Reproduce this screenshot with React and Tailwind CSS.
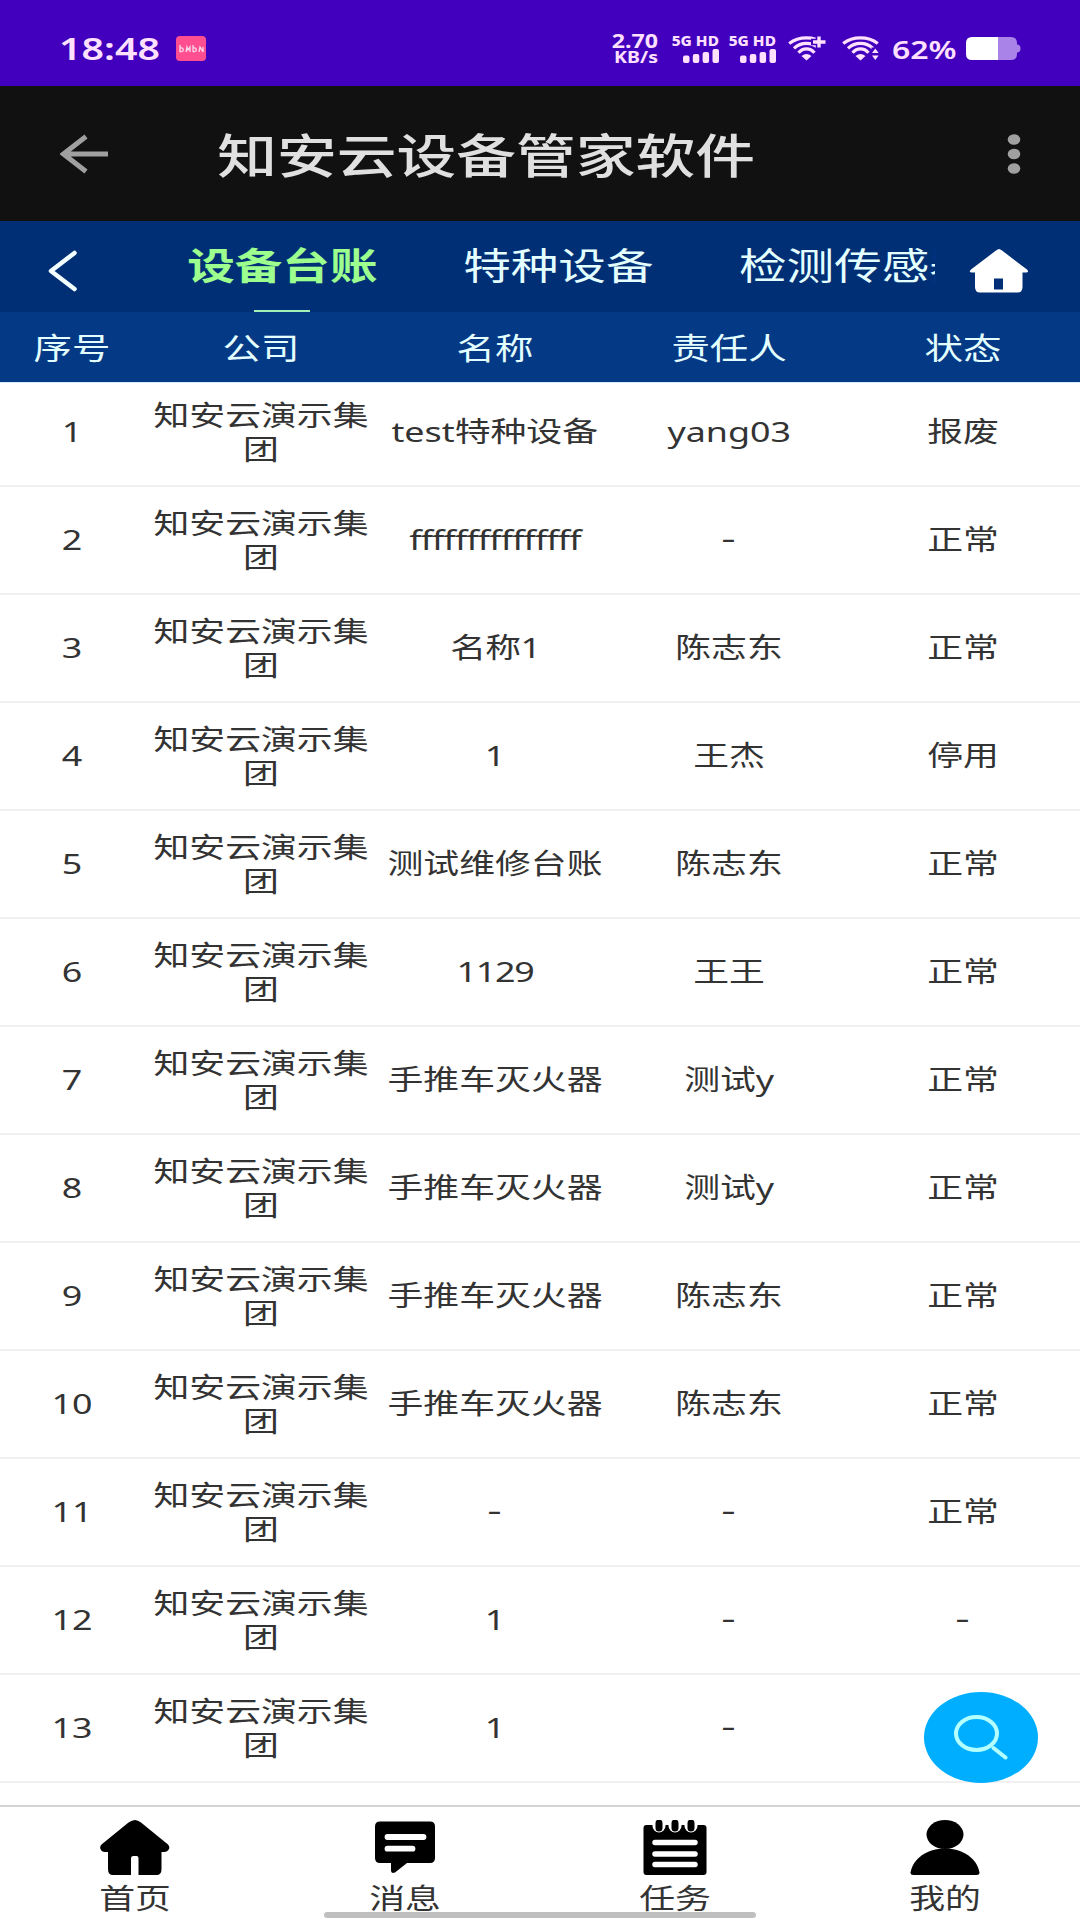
import clsx from "clsx";

const company = "知安云演示集团";

const rows = [
  { name: "test特种设备", owner: "yang03", status: "报废" },
  { name: "fffffffffffffff", owner: "-", status: "正常", tight: "tracking-[-0.7px]" },
  { name: "名称1", owner: "陈志东", status: "正常", tight: "tracking-[-0.5px]" },
  { name: "1", owner: "王杰", status: "停用" },
  { name: "测试维修台账", owner: "陈志东", status: "正常" },
  { name: "1129", owner: "王王", status: "正常", tight: "tracking-[-1px]" },
  { name: "手推车灭火器", owner: "测试y", status: "正常" },
  { name: "手推车灭火器", owner: "测试y", status: "正常" },
  { name: "手推车灭火器", owner: "陈志东", status: "正常" },
  { name: "手推车灭火器", owner: "陈志东", status: "正常" },
  { name: "-", owner: "-", status: "正常" },
  { name: "1", owner: "-", status: "-" },
  { name: "1", owner: "-", status: "" },
];

const columns = ["序号", "公司", "名称", "责任人", "状态"];

const tabs = [
  { label: "设备台账", width: "w-[276px]", active: true },
  { label: "特种设备", width: "w-[276px]" },
  { label: "检测传感器", width: "w-[324px]" },
];

// The whole UI uses wide letterforms
const Wide = ({ className, children }) => (
  <span className={clsx("inline-block scale-x-[1.28] whitespace-nowrap", className)}>
    {children}
  </span>
);

const Signal = () => (
  <div className="flex flex-col items-end w-[48px]">
    <span className="text-[14px] leading-[14px] font-extrabold origin-right scale-x-[1.1] -mt-[1px] whitespace-nowrap">
      5G HD
    </span>
    <svg width="36" height="14" viewBox="0 0 36 14" className="mt-[1px]" fill="currentColor">
      <rect x="0" y="6.5" width="6.5" height="7.5" rx="2" />
      <rect x="9.8" y="5" width="6.5" height="9" rx="2" />
      <rect x="19.6" y="3" width="6.5" height="11" rx="2" />
      <rect x="29.5" y="0" width="6.5" height="14" rx="2" />
    </svg>
  </div>
);

const Wifi = ({ children }) => (
  <svg width="38" height="25" viewBox="0 0 38 25" fill="none" stroke="currentColor" strokeWidth="3.2">
    <path d="M1.200 7.500C11 0 26 0 35.800 7.500" />
    <path d="M6 12.300C13 5.700 24 5.700 31 12.300" />
    <path d="M10.500 16.800C15 11.600 22 11.600 26.500 16.800" />
    <path d="M13.500 20Q18.500 16 23.500 20L18.500 24.500Z" fill="currentColor" stroke="none" />
    {children}
  </svg>
);

const StatusBar = () => (
  <div className="flex items-center h-[86px] bg-[#4200be] text-[#ffe0ff] pt-[11px] pl-[59px] pr-[59px]">
    <span className="text-[31px] font-semibold leading-none origin-left scale-x-[1.27] w-[117px]">18:48</span>
    <svg width="30" height="25" viewBox="0 0 30 25">
      <rect width="30" height="25" rx="4" fill="#ff4f90" />
      <path
        d="M4 9v7M4 12q4-1 3 3l-3 1M10 16l1-5 1 3 2-3v5M17 9v7M17 12q4-1 3 3l-3 1M23 16l1-5 3 5M27 11v5"
        fill="none"
        stroke="#ffd9ec"
        strokeWidth="1.3"
      />
    </svg>
    <div className="flex items-center ml-auto">
      <div className="flex flex-col items-end w-[46px] mr-[13px] font-bold">
        <span className="text-[19px] leading-[16px] origin-right scale-x-[1.22]">2.70</span>
        <span className="text-[16px] leading-[16px] origin-right scale-x-[1.22]">KB/s</span>
      </div>
      <Signal />
      <div className="w-[9px]" />
      <Signal />
      <div className="w-[12px]" />
      <Wifi>
        <path d="M31 -1v16M23 6h15" stroke="#4200be" strokeWidth="6.500" />
        <path d="M31 0.500v11M25 6h12.500" strokeWidth="3.400" />
      </Wifi>
      <div className="w-[16px]" />
      <Wifi>
        <path d="M33.500 11.500v14" stroke="#4200be" strokeWidth="8" />
        <path d="M30 17l3.300-4.500 3.300 4.500zM30 19.500h6.600l-3.300 4.500z" fill="currentColor" stroke="none" />
      </Wifi>
      <div className="flex justify-center w-[64px] ml-[12px] mr-[10px] pt-[2px]">
        <Wide className="text-[25px] font-semibold leading-none">62%</Wide>
      </div>
      <svg width="55" height="23" viewBox="0 0 55 23">
        <path d="M32 0h13q6 0 6 6v1.500q3.500 0 3.500 4t-3.500 4V17q0 6-6 6H32z" fill="#a983e8" />
        <path d="M6 0h26v23H6q-6 0-6-6V6q0-6 6-6z" fill="#fff" />
      </svg>
    </div>
  </div>
);

const TitleBar = () => (
  <div className="flex items-center h-[135px] bg-[#111111] pl-[60px] pr-[59px]">
    <svg width="49" height="40" viewBox="0 0 49 40" fill="none" stroke="#a0a0a0" strokeWidth="5">
      <path d="M3 20h45M26 2.500L3.500 20l22.500 17.500" />
    </svg>
    <div className="flex justify-center w-[540px] ml-[107px] pt-[3px]">
      <Wide className="text-[46.700px] leading-none font-medium text-[#e0e0e0]">知安云设备管家软件</Wide>
    </div>
    <svg width="14" height="40" viewBox="0 0 14 40" className="ml-auto" fill="#a0a0a0">
      <ellipse cx="7" cy="5.500" rx="6.300" ry="5.200" />
      <ellipse cx="7" cy="20" rx="6.300" ry="5.200" />
      <ellipse cx="7" cy="34.500" rx="6.300" ry="5.200" />
    </svg>
  </div>
);

const TabBar = () => (
  <div className="flex h-[91px] bg-[#002f76] text-[#e4ffff]">
    <div className="w-[144px] pt-[29px] pl-[48px]">
      <svg width="30" height="42" viewBox="0 0 30 42" fill="none" stroke="#f4ffff" strokeWidth="4.500" strokeLinecap="round" strokeLinejoin="round">
        <path d="M26.500 3L3 21l23.500 18" />
      </svg>
    </div>
    <div className="flex w-[791px] overflow-hidden">
      {tabs.map((tab) => (
        <div key={tab.label} className={clsx("flex flex-col items-center shrink-0", tab.width)}>
          <div className="flex items-center h-[89px]">
            <Wide className={clsx("text-[37.200px] leading-none", tab.active && "font-bold text-[#9cff8e]")}>
              {tab.label}
            </Wide>
          </div>
          {tab.active && <div className="w-[56px] h-[2px] bg-[#a0f0b8]" />}
        </div>
      ))}
    </div>
    <svg width="60" height="44" viewBox="0 0 60 44" className="ml-[34px] mt-[28px]">
      <path
        d="M30 0q1 0 3 1.500l25 19q2.500 3-1 3h-3.500V38q0 5.500-5 5.500H11q-5 0-5-5.500V23.500H3q-4 0-1-3l25-19Q29 0 30 0z"
        fill="#fff"
      />
      <rect x="25" y="29.500" width="9" height="11" fill="#002f76" />
    </svg>
  </div>
);

const Cell = ({ first, children }) => (
  <div className={clsx("flex justify-center items-center shrink-0", first ? "w-[144px]" : "w-[234px]")}>
    {children}
  </div>
);

const TableHeader = () => (
  <div className="relative z-10 flex h-[71px] pt-[1px] bg-[#033985] text-[#e4ffff] text-[30px] leading-none border-b border-[#d5ecfa]">
    {columns.map((col, i) => (
      <Cell key={col} first={i === 0}>
        <Wide>{col}</Wide>
      </Cell>
    ))}
  </div>
);

// Empty values come through as a single dash
const Value = ({ className, children }) =>
  children === "-" ? (
    <span className="pb-[6px] scale-x-[1.6]">-</span>
  ) : (
    <Wide className={clsx("pb-[2px]", className)}>{children}</Wide>
  );

const Row = ({ index, row }) => (
  <div className="flex h-[108px] border-b-2 border-[#f1f1f1] text-[#333] text-[28px] leading-[34px]">
    <Cell first>
      <Value>{index}</Value>
    </Cell>
    <Cell>
      <span className="w-[180px] text-center break-all scale-x-[1.28]">{company}</span>
    </Cell>
    <Cell>
      <Value className={row.tight}>{row.name}</Value>
    </Cell>
    <Cell>
      <Value>{row.owner}</Value>
    </Cell>
    <Cell>
      <Value>{row.status}</Value>
    </Cell>
  </div>
);

const HomeIcon = () => (
  <path d="M35 0q3 0 6 2.500l27 22q2 2 1 4.500-1.500 3-5 3h-2.500v17q0 6-5 6H38.500V38q0-2-2-2h-3q-2.500 0-2.500 2v17H13q-5 0-5-6V32H5q-3.500 0-4.500-3-1-2.500 1-4.500l27-22Q32 0 35 0z" />
);

const MessageIcon = () => (
  <>
    <path d="M10 1.500h50q5 0 5 5v31.500q0 5-5 5H37L25 52.500q-4 1.500-4-2V43H10q-5 0-5-5V6.500q0-5 5-5z" />
    <path d="M17.500 17h36M17.500 28.700h25" stroke="#fff" strokeWidth="5.800" strokeLinecap="round" />
  </>
);

const TaskIcon = () => (
  <>
    <rect x="3.500" y="5" width="63" height="50" rx="3" />
    <path d="M19 0v6M35 0v6M51 0v6" stroke="#fff" strokeWidth="13" strokeLinecap="round" />
    <path d="M19 3v5M35 3v5M51 3v5" stroke="#000" strokeWidth="7" strokeLinecap="round" />
    <path d="M15 22.500h40M15 34h40M15 44.500h40" stroke="#fff" strokeWidth="5.500" strokeLinecap="round" />
  </>
);

const UserIcon = () => (
  <>
    <ellipse cx="35" cy="14.500" rx="18.500" ry="14.500" />
    <path d="M35 28.500c18 0 32 10 34.500 24q0 2.500-3 2.500h-63q-3 0-3-2.500C3 38.500 17 28.500 35 28.500z" />
  </>
);

const navItems = [
  { label: "首页", Icon: HomeIcon },
  { label: "消息", Icon: MessageIcon },
  { label: "任务", Icon: TaskIcon },
  { label: "我的", Icon: UserIcon },
];

const BottomNav = () => (
  <div className="relative z-10 flex h-[115px] bg-white border-t-2 border-[#d3d3d3] text-[#333]">
    {navItems.map(({ label, Icon }) => (
      <div key={label} className="flex flex-col items-center flex-1 pt-[13px]">
        <svg width="70" height="55" viewBox="0 0 70 55" className="shrink-0">
          <Icon />
        </svg>
        <Wide className="text-[28px] leading-[46px]">{label}</Wide>
      </div>
    ))}
    <div className="absolute left-[324px] bottom-[2px] w-[432px] h-[6px] rounded-full bg-[#bfbfbf]" />
  </div>
);

const App = () => {
  return (
    <div className="relative flex flex-col w-[1080px] h-[1920px] overflow-hidden bg-white font-['Noto_Sans','Noto_Sans_CJK_SC',sans-serif]">
      <StatusBar />
      <TitleBar />
      <TabBar />
      <TableHeader />
      <div className="flex-1 min-h-0 -mt-1 overflow-hidden">
        {rows.map((row, i) => (
          <Row key={i} index={i + 1} row={row} />
        ))}
      </div>
      <BottomNav />
      <button className="absolute z-20 left-[924px] top-[1692px] w-[114px] h-[91px] rounded-[50%] bg-[#00aeff] flex items-center justify-center">
        <svg width="54" height="45" viewBox="0 0 54 45" fill="none" stroke="#b4ffff">
          <ellipse cx="22.500" cy="18.500" rx="20.500" ry="16.500" strokeWidth="4" />
          <path d="M39.500 33l12 9.500" strokeWidth="4" strokeLinecap="round" />
        </svg>
      </button>
    </div>
  );
};

export default App;
